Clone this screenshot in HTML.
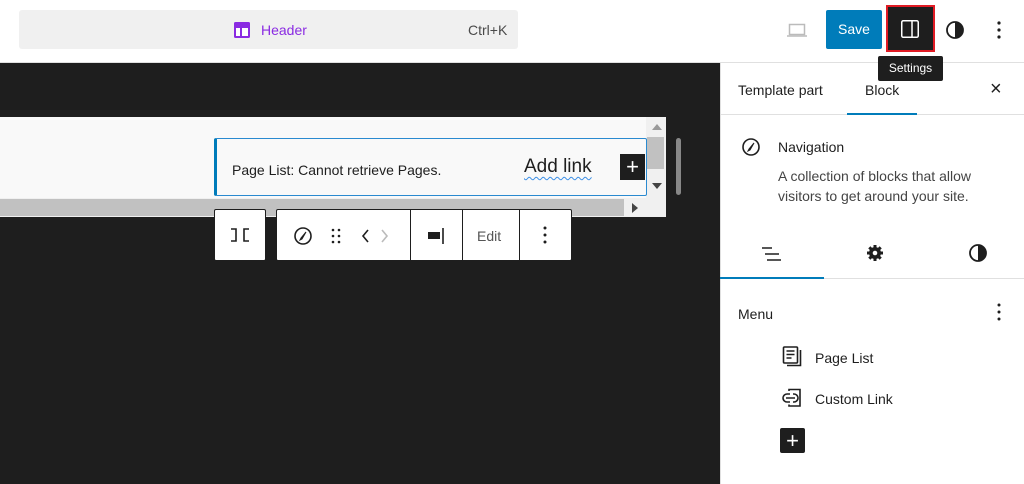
<!DOCTYPE html>
<html><head><meta charset="utf-8"><style>
*{box-sizing:border-box;margin:0;padding:0}
body{width:1024px;height:484px;overflow:hidden;background:#fff;font-family:"Liberation Sans",sans-serif;color:#1e1e1e;position:relative}
.a{position:absolute}
</style></head><body>
<!-- top bar -->
<div class="a" style="left:0;top:0;width:1024px;height:63px;background:#fff;border-bottom:1px solid #e0e0e0"></div>
<div class="a" style="left:19px;top:10px;width:499px;height:39px;background:#f0f0f0;border-radius:3px"></div>
<svg class="a" style="left:233px;top:21px" width="18" height="18" viewBox="0 0 18 18"><rect x="1" y="1" width="16" height="16" rx="1.5" fill="#8a2be2"/><rect x="3" y="7" width="4" height="8" fill="#fff"/><rect x="9" y="7" width="6" height="8" fill="#fff"/></svg>
<div class="a" style="left:261px;top:22px;font-size:14px;color:#8a2be2">Header</div>
<div class="a" style="left:468px;top:22px;font-size:14px;color:#4a4a4a">Ctrl+K</div>
<svg class="a" style="left:786px;top:22px" width="22" height="16" viewBox="0 0 22 16"><rect x="3.5" y="2.5" width="15" height="10" fill="none" stroke="#bbb" stroke-width="1.5"/><path d="M1 14h20" stroke="#bbb" stroke-width="1.5"/></svg>
<div class="a" style="left:826px;top:10px;width:56px;height:39px;background:#007cba;border-radius:2px;color:#fff;font-size:14px;line-height:39px;text-align:center">Save</div>
<div class="a" style="left:886px;top:5px;width:49px;height:47px;border:2px solid #e01b24;background:#1e1e1e"></div>
<svg class="a" style="left:900px;top:19px" width="20" height="20" viewBox="0 0 20 20"><rect x="1.75" y="1.75" width="16.5" height="16.5" rx="1.5" fill="none" stroke="#fff" stroke-width="1.5"/><path d="M12 2v16" stroke="#fff" stroke-width="1.5"/></svg>
<svg class="a" style="left:945px;top:20px" width="20" height="20" viewBox="0 0 20 20"><circle cx="10" cy="10" r="8" fill="none" stroke="#1e1e1e" stroke-width="1.8"/><path d="M10 2a8 8 0 0 1 0 16z" fill="#1e1e1e"/></svg>
<svg class="a" style="left:994px;top:20px" width="10" height="20"><circle cx="5" cy="3" r="1.6" fill="#1e1e1e"/><circle cx="5" cy="10" r="1.6" fill="#1e1e1e"/><circle cx="5" cy="17" r="1.6" fill="#1e1e1e"/></svg>
<!-- canvas -->
<div class="a" style="left:0;top:63px;width:720px;height:421px;background:#1e1e1e"></div>
<div class="a" style="left:0;top:117px;width:666px;height:100px;background:#f9f9f9;border-radius:0 2px 2px 0"></div>
<div class="a" style="left:646px;top:117px;width:20px;height:100px;background:#f0f0f0"></div>
<div class="a" style="left:652px;top:124px;width:0;height:0;border-left:5px solid transparent;border-right:5px solid transparent;border-bottom:6px solid #999"></div>
<div class="a" style="left:647px;top:137px;width:17px;height:32px;background:#c1c1c1"></div>
<div class="a" style="left:652px;top:183px;width:0;height:0;border-left:5px solid transparent;border-right:5px solid transparent;border-top:6px solid #444"></div>
<div class="a" style="left:0;top:198px;width:646px;height:19px;background:#f0f0f0"></div>
<div class="a" style="left:0;top:199px;width:624px;height:17px;background:#c1c1c1"></div>
<div class="a" style="left:632px;top:203px;width:0;height:0;border-top:5px solid transparent;border-bottom:5px solid transparent;border-left:6px solid #444"></div>
<div class="a" style="left:676px;top:138px;width:5px;height:57px;background:#888;border-radius:3px"></div>
<div class="a" style="left:214px;top:138px;width:433px;height:58px;border:1.5px solid #2a8ad0;border-left:3px solid #007cba;border-radius:2px;background:#f9f9f9"></div>
<div class="a" style="left:232px;top:162px;font-size:14px;color:#1e1e1e">Page List: Cannot retrieve Pages.</div>
<div class="a" style="left:524px;top:156px;font-size:19px;color:#1e1e1e;text-decoration:underline wavy #3a8ee6;text-decoration-thickness:1px;text-underline-offset:4px">Add link</div>
<div class="a" style="left:620px;top:154px;width:25px;height:26px;background:#1e1e1e;color:#fff;font-size:22px;line-height:25px;text-align:center">+</div>
<!-- toolbar -->
<div class="a" style="left:214px;top:209px;width:52px;height:52px;background:#fff;border:1px solid #1e1e1e;border-radius:2px"></div>
<svg class="a" style="left:229px;top:226px" width="22" height="18" viewBox="0 0 22 18"><path d="M2 3h5v12H2M20 3h-5v12h5" fill="none" stroke="#1e1e1e" stroke-width="1.6"/></svg>
<div class="a" style="left:276px;top:209px;width:296px;height:52px;background:#fff;border:1px solid #1e1e1e;border-radius:2px"></div>
<div class="a" style="left:410px;top:209px;width:1px;height:52px;background:#1e1e1e"></div>
<div class="a" style="left:462px;top:209px;width:1px;height:52px;background:#1e1e1e"></div>
<div class="a" style="left:519px;top:209px;width:1px;height:52px;background:#1e1e1e"></div>
<svg class="a" style="left:293px;top:226px" width="20" height="20" viewBox="0 0 20 20"><circle cx="10" cy="10" r="8" fill="none" stroke="#1e1e1e" stroke-width="1.6"/><path d="M13 6l-4 7-2 1 1-2z" fill="#1e1e1e" stroke="#1e1e1e"/></svg>
<svg class="a" style="left:330px;top:227px" width="12" height="18"><g fill="#1e1e1e"><circle cx="3" cy="3" r="1.3"/><circle cx="9" cy="3" r="1.3"/><circle cx="3" cy="9" r="1.3"/><circle cx="9" cy="9" r="1.3"/><circle cx="3" cy="15" r="1.3"/><circle cx="9" cy="15" r="1.3"/></g></svg>
<svg class="a" style="left:360px;top:227px" width="32" height="18"><path d="M8 3l-5 6 5 6" fill="none" stroke="#1e1e1e" stroke-width="1.6"/><path d="M22 3l5 6-5 6" fill="none" stroke="#bbb" stroke-width="1.6"/></svg>
<svg class="a" style="left:425px;top:226px" width="24" height="20"><rect x="3" y="6" width="12" height="7" fill="#1e1e1e"/><path d="M18 2v16" stroke="#1e1e1e" stroke-width="1.6"/></svg>
<div class="a" style="left:477px;top:228px;font-size:14px;color:#555">Edit</div>
<svg class="a" style="left:540px;top:225px" width="10" height="20"><circle cx="5" cy="3" r="1.5" fill="#1e1e1e"/><circle cx="5" cy="10" r="1.5" fill="#1e1e1e"/><circle cx="5" cy="17" r="1.5" fill="#1e1e1e"/></svg>
<!-- tooltip -->
<div class="a" style="left:878px;top:56px;width:65px;height:25px;background:#1e1e1e;border-radius:2px;color:#fff;font-size:12px;line-height:25px;text-align:center">Settings</div>
<!-- sidebar -->
<div class="a" style="left:720px;top:63px;width:1px;height:421px;background:#e0e0e0"></div>
<div class="a" style="left:738px;top:82px;font-size:14px;color:#1e1e1e">Template part</div>
<div class="a" style="left:865px;top:82px;font-size:14px;color:#1e1e1e">Block</div>
<div class="a" style="left:990px;top:78px;font-size:20px;color:#1e1e1e">×</div>
<div class="a" style="left:721px;top:114px;width:303px;height:1px;background:#e0e0e0"></div>
<div class="a" style="left:847px;top:113px;width:70px;height:2px;background:#007cba"></div>
<svg class="a" style="left:741px;top:137px" width="20" height="20" viewBox="0 0 20 20"><circle cx="10" cy="10" r="8" fill="none" stroke="#1e1e1e" stroke-width="1.6"/><path d="M13 6l-4 7-2 1 1-2z" fill="#1e1e1e" stroke="#1e1e1e"/></svg>
<div class="a" style="left:778px;top:139px;font-size:14px;color:#1e1e1e">Navigation</div>
<div class="a" style="left:778px;top:166px;font-size:14px;line-height:20px;color:#444;width:230px">A collection of blocks that allow visitors to get around your site.</div>
<svg class="a" style="left:760px;top:244px" width="24" height="20"><path d="M2 4h10M5 10h14M7 16h14" stroke="#1e1e1e" stroke-width="1.6"/></svg>
<svg class="a" style="left:865px;top:243px" width="20" height="20" viewBox="0 0 20 20"><circle cx="10" cy="10" r="6" fill="#1e1e1e"/><g stroke="#1e1e1e" stroke-width="3"><path d="M10 2v16M2 10h16M4.3 4.3l11.4 11.4M15.7 4.3L4.3 15.7"/></g><circle cx="10" cy="10" r="2.3" fill="#fff"/></svg>
<svg class="a" style="left:968px;top:243px" width="20" height="20" viewBox="0 0 20 20"><circle cx="10" cy="10" r="8" fill="none" stroke="#1e1e1e" stroke-width="1.8"/><path d="M10 2a8 8 0 0 1 0 16z" fill="#1e1e1e"/></svg>
<div class="a" style="left:721px;top:278px;width:303px;height:1px;background:#e0e0e0"></div>
<div class="a" style="left:720px;top:277px;width:104px;height:2px;background:#007cba"></div>
<div class="a" style="left:738px;top:306px;font-size:14px;color:#1e1e1e">Menu</div>
<svg class="a" style="left:994px;top:302px" width="10" height="20"><circle cx="5" cy="3" r="1.5" fill="#1e1e1e"/><circle cx="5" cy="10" r="1.5" fill="#1e1e1e"/><circle cx="5" cy="17" r="1.5" fill="#1e1e1e"/></svg>
<svg class="a" style="left:781px;top:345px" width="24" height="24" viewBox="0 0 24 24"><rect x="2.5" y="2" width="14" height="16" rx="1" fill="none" stroke="#1e1e1e" stroke-width="1.6"/><path d="M5.5 6h8M5.5 9.5h8M5.5 13h5" stroke="#1e1e1e" stroke-width="1.5"/><path d="M19.5 5v15.5H6" fill="none" stroke="#1e1e1e" stroke-width="1.6"/></svg>
<div class="a" style="left:815px;top:350px;font-size:14px;color:#1e1e1e">Page List</div>
<svg class="a" style="left:781px;top:387px" width="24" height="22" viewBox="0 0 24 22"><path d="M8 4V2.5h11V19H8v-1.5" fill="none" stroke="#1e1e1e" stroke-width="1.6"/><path d="M9 7H6a4 4 0 0 0 0 8h3M12 7h1a4 4 0 0 1 0 8h-1M5 11h9" fill="none" stroke="#1e1e1e" stroke-width="1.6"/></svg>
<div class="a" style="left:815px;top:391px;font-size:14px;color:#1e1e1e">Custom Link</div>
<div class="a" style="left:780px;top:428px;width:25px;height:25px;background:#1e1e1e;border-radius:2px;color:#fff;font-size:22px;line-height:25px;text-align:center">+</div>
</body></html>
